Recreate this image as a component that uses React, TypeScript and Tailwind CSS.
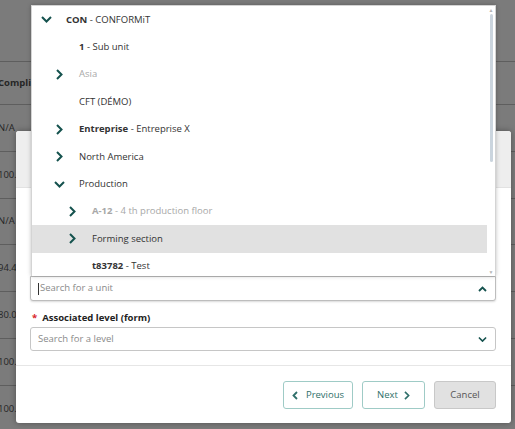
import { Fragment } from 'react';

type Node = {
  code?: string;
  name: string;
  level: 0 | 1 | 2;
  state?: 'open' | 'closed';
  muted?: boolean;
  active?: boolean;
};

const nodes: Node[] = [
  { code: 'CON', name: 'CONFORMiT', level: 0, state: 'open' },
  { code: '1', name: 'Sub unit', level: 1 },
  { name: 'Asia', level: 1, state: 'closed', muted: true },
  { name: 'CFT (DÉMO)', level: 1 },
  { code: 'Entreprise', name: 'Entreprise X', level: 1, state: 'closed' },
  { name: 'North America', level: 1, state: 'closed' },
  { name: 'Production', level: 1, state: 'open' },
  { code: 'A-12', name: '4 th production floor', level: 2, state: 'closed', muted: true },
  { name: 'Forming section', level: 2, state: 'closed', active: true },
  { code: 't83782', name: 'Test', level: 2 },
];

const indent = ['pl-[7px]', 'pl-[20px]', 'pl-[33px]'];

const bgRows = ['N/A', '100.0%', 'N/A', '94.4%', '80.0%', '100.0%', '100.0%'];

function Chevron({ dir, className = '' }: { dir: 'down' | 'right' | 'up' | 'left'; className?: string }) {
  if (dir === 'down')
    return (
      <svg width="11" height="7" viewBox="0 0 11 7" className={className}>
        <polyline points="1,1 5.5,5.5 10,1" fill="none" stroke="currentColor" strokeWidth="2" />
      </svg>
    );
  if (dir === 'up')
    return (
      <svg width="9" height="6" viewBox="0 0 9 6" className={className}>
        <polyline points="1,5 4.5,1.5 8,5" fill="none" stroke="currentColor" strokeWidth="1.8" />
      </svg>
    );
  if (dir === 'left')
    return (
      <svg width="6" height="9" viewBox="0 0 6 9" className={className}>
        <polyline points="5,1 1.5,4.5 5,8" fill="none" stroke="currentColor" strokeWidth="1.8" />
      </svg>
    );
  return (
    <svg width="7" height="11" viewBox="0 0 7 11" className={className}>
      <polyline points="1,1 5.5,5.5 1,10" fill="none" stroke="currentColor" strokeWidth="2" />
    </svg>
  );
}

function TreeRow({ node }: { node: Node }) {
  const tone = node.muted ? 'text-[#a8a8a8]' : 'text-[#333333]';
  return (
    <div
      className={`flex items-center h-[27.4px] shrink-0 ${indent[node.level]} ${node.active ? 'bg-[#e1e1e1]' : ''}`}
    >
      <span className="w-[14px] flex justify-center text-[#15524e]">
        {node.state && <Chevron dir={node.state === 'open' ? 'down' : 'right'} />}
      </span>
      <span className={`ml-[13px] whitespace-nowrap ${tone}`}>
        {node.code && (
          <Fragment>
            <b className="font-bold">{node.code}</b> -{' '}
          </Fragment>
        )}
        {node.name}
      </span>
    </div>
  );
}

function Dropdown() {
  return (
    <div className="absolute bottom-full left-[1px] right-0 h-[271px] bg-white border border-[#d4d4d4] border-b-0 shadow-[0_0_4px_rgba(0,0,0,0.25)] flex overflow-hidden">
      <div className="flex-1 flex flex-col">
        {nodes.map((n, i) => (
          <TreeRow key={i} node={n} />
        ))}
      </div>
      <div className="w-[8px] flex flex-col items-center pt-[1px]">
        <span className="text-[5px] leading-[6px] text-[#b5b5b5]">▲</span>
        <div className="w-[3px] h-[148px] mt-[1px] bg-[#cbd5de] rounded-full" />
        <div className="flex-1" />
        <span className="text-[5px] leading-[6px] text-[#b5b5b5] mb-[1px]">▼</span>
      </div>
    </div>
  );
}

function Background() {
  return (
    <div className="flex flex-col">
      <div className="h-[62px] border-b border-[#5e5e5e]" />
      <div className="h-[43px] border-b border-[#5e5e5e] flex items-center -ml-[2px] font-bold text-[#262626]">
        Compliance
      </div>
      {bgRows.map((r, i) => (
        <div key={i} className="h-[46.8px] border-b border-[#5e5e5e] flex items-center -ml-[2px] text-[#262626]">
          {r}
        </div>
      ))}
    </div>
  );
}

export default function App() {
  return (
    <div
      className="relative w-[515px] h-[429px] overflow-hidden bg-[#7b7b7b] text-[9.5px]"
      style={{ fontFamily: '"Open Sans", "Noto Sans", sans-serif' }}
    >
      <Background />

      <div className="absolute left-[16px] top-[131px] w-[495px] h-[292px] bg-white rounded-[3px] shadow-[0_0_6px_rgba(0,0,0,0.35)] flex flex-col">
        <div className="h-[57px] bg-[#eeeeee] border-b border-[#e2e2e2] rounded-t-[3px]" />

        <div className="pl-[14px] pr-[15px] pt-[88px] h-[178px] border-b border-[#e6e6e6]">
          <div className="relative">
            <Dropdown />
            <div className="h-[25px] border border-[#bdbdbd] rounded-b-[3px] bg-white flex items-center pl-[7px] pr-[8px] shadow-[0_1px_2px_rgba(0,0,0,0.15)]">
              <span className="w-px h-[12px] bg-[#333333] mr-px" />
              <span className="flex-1 text-[#8a8a8a]">Search for a unit</span>
              <Chevron dir="up" className="text-[#15524e]" />
            </div>
          </div>

          <div className="mt-[10px] flex items-center gap-[5px] h-[14px]">
            <span className="text-[#d9262c] font-bold pl-[2px]">*</span>
            <span className="font-bold text-[#222222]">Associated level (form)</span>
          </div>

          <div className="mt-[2px] h-[24px] border border-[#c6c6c6] rounded-[3px] flex items-center pl-[7px] pr-[7px]">
            <span className="flex-1 text-[#8a8a8a]">Search for a level</span>
            <span className="text-[#15524e] scale-[0.8]">
              <Chevron dir="down" />
            </span>
          </div>
        </div>

        <div className="flex justify-end gap-[9px] pt-[15px] pr-[15px]">
          <button className="w-[70px] h-[28px] border border-[#9fcbc6] rounded-[3px] bg-white text-[#2f6f6a] flex items-center justify-center gap-[8px]">
            <Chevron dir="left" />
            <span>Previous</span>
          </button>
          <button className="w-[63px] h-[28px] border border-[#9fcbc6] rounded-[3px] bg-white text-[#2f6f6a] flex items-center justify-center gap-[6px]">
            <span>Next</span>
            <Chevron dir="right" className="w-[6px] h-[9px]" />
          </button>
          <button className="w-[62px] h-[28px] border border-[#c8c8c8] rounded-[3px] bg-[#e1e1e1] text-[#555555] flex items-center justify-center">
            Cancel
          </button>
        </div>
      </div>
    </div>
  );
}
